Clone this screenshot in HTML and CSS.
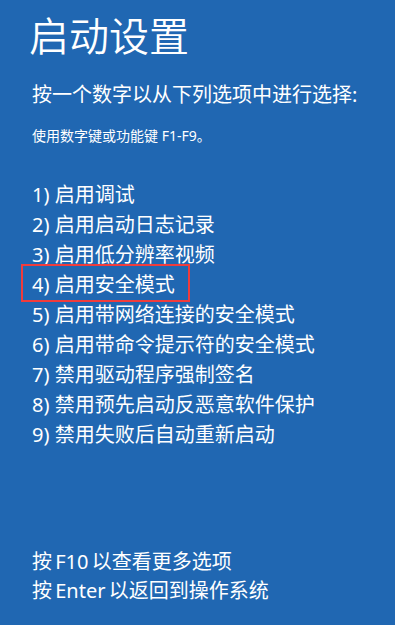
FILE: index.html
```html
<!DOCTYPE html>
<html lang="zh-CN">
<head>
<meta charset="utf-8">
<title>启动设置</title>
<link rel="stylesheet" href="styles.css">
</head>
<body>
<div class="screen">
  <h1 class="title">启动设置</h1>
  <p class="prompt">按一个数字以从下列选项中进行选择:</p>
  <p class="hint">使用数字键或功能键 F1-F9。</p>
  <ol class="options">
    <li>1) 启用调试</li>
    <li>2) 启用启动日志记录</li>
    <li>3) 启用低分辨率视频</li>
    <li class="selected">4) 启用安全模式</li>
    <li>5) 启用带网络连接的安全模式</li>
    <li>6) 启用带命令提示符的安全模式</li>
    <li>7) 禁用驱动程序强制签名</li>
    <li>8) 禁用预先启动反恶意软件保护</li>
    <li>9) 禁用失败后自动重新启动</li>
  </ol>
  <div class="footer">
    <p>按 F10 以查看更多选项</p>
    <p>按 Enter 以返回到操作系统</p>
  </div>
</div>
</body>
</html>
```

FILE: styles.css
```css
html, body {
  margin: 0;
  padding: 0;
  background: #2067b2;
}
body {
  font-family: "Noto Sans", "Noto Sans CJK SC", sans-serif;
  font-weight: 400;
  color: #ffffff;
}
.screen {
  box-sizing: border-box;
  min-height: 625px;
  display: flex;
  flex-direction: column;
  padding: 16px 0 20px 32px;
}
.title {
  margin: 0 0 0 -3px;
  font-size: 40px;
  line-height: 40px;
  font-weight: 350;
}
.prompt {
  margin: 29px 0 0 0;
  font-size: 20px;
  line-height: 20px;
}
.hint {
  margin: 24px 0 0 0;
  font-size: 14px;
  line-height: 14px;
}
.options {
  list-style: none;
  margin: 37px 0 0 0;
  padding: 0;
  font-size: 20px;
  line-height: 30px;
}
.options li {
  position: relative;
}
.options li.selected::after {
  content: "";
  position: absolute;
  left: -11px;
  top: -6px;
  width: 169px;
  height: 38px;
  box-sizing: border-box;
  border: 2.5px solid #f03c3c;
}
.footer {
  margin-top: auto;
  font-size: 20px;
  line-height: 29px;
  word-spacing: -2px;
}
.footer p {
  margin: 0;
}
```
